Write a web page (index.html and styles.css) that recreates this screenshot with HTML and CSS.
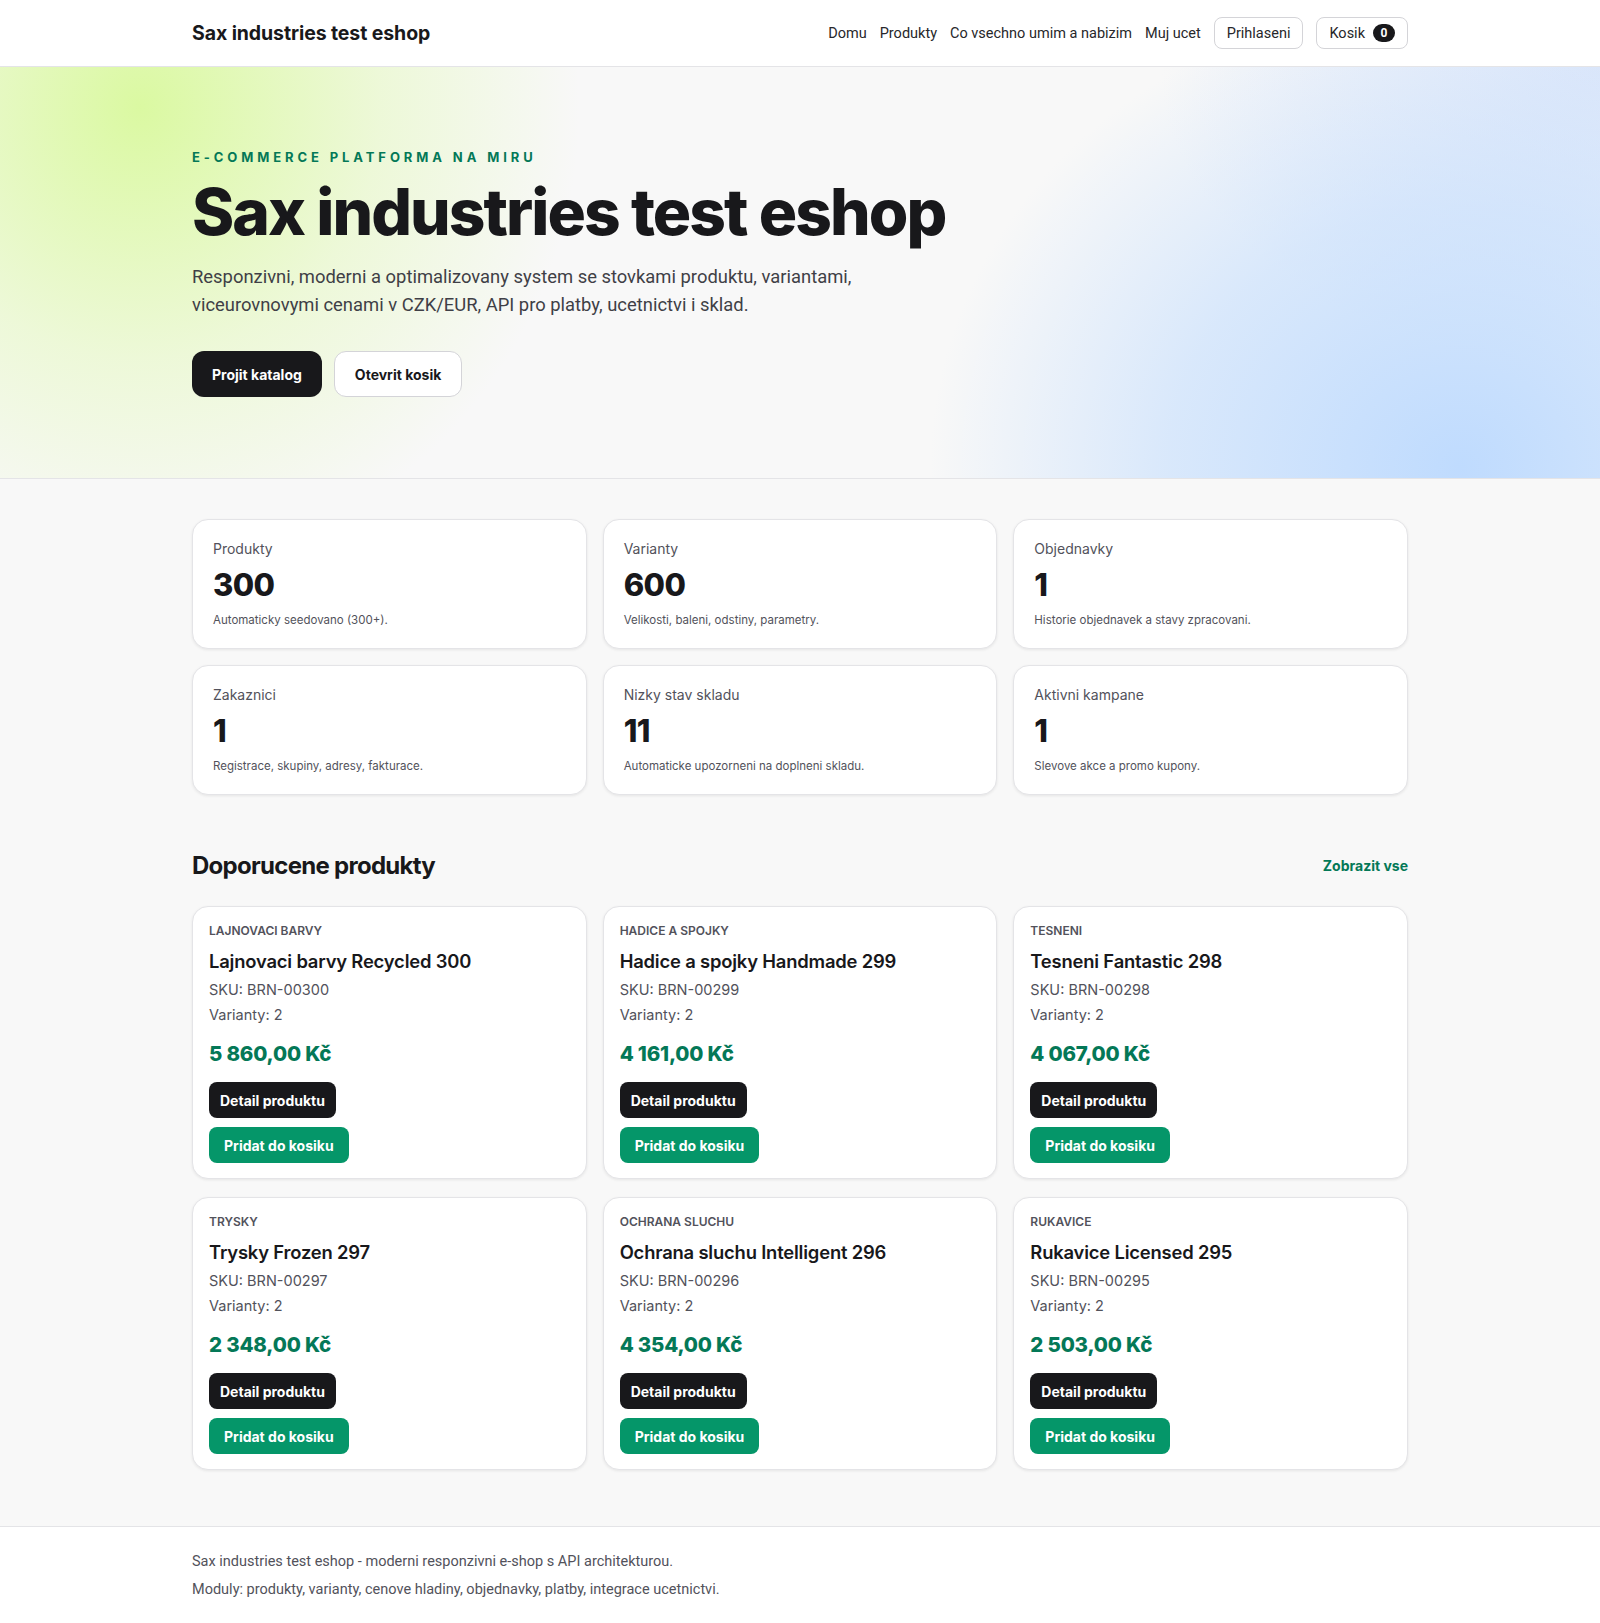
FILE: index.html
```html
<!DOCTYPE html>
<html lang="cs">

<head>
  <meta charset="UTF-8">
  <meta name="viewport" content="width=device-width, initial-scale=1.0">
  <title>Sax industries test eshop</title>
  <link rel="stylesheet" href="styles.css">
</head>

<body>
  <header class="site-header">
    <div class="container header-inner">
      <a class="brand" href="#">Sax industries test eshop</a>
      <nav class="nav">
        <a href="#">Domu</a>
        <a href="#">Produkty</a>
        <a href="#">Co vsechno umim a nabizim</a>
        <a href="#">Muj ucet</a>
        <a class="nav-btn" href="#">Prihlaseni</a>
        <a class="nav-btn" href="#">Kosik <span class="badge">0</span></a>
      </nav>
    </div>
  </header>

  <section class="hero">
    <div class="container">
      <p class="eyebrow">E-commerce platforma na miru</p>
      <h1 class="hero-title">Sax industries test eshop</h1>
      <p class="hero-text">Responzivni, moderni a optimalizovany system se stovkami produktu, variantami, viceurovnovymi cenami v CZK/EUR, API pro platby, ucetnictvi i sklad.</p>
      <div class="hero-actions">
        <a class="btn btn-dark" href="#">Projit katalog</a>
        <a class="btn btn-light" href="#">Otevrit kosik</a>
      </div>
    </div>
  </section>

  <main class="main">
    <div class="container">
      <div class="stats">
        <div class="stat-card">
          <span class="stat-label">Produkty</span>
          <strong class="stat-value">300</strong>
          <span class="stat-desc">Automaticky seedovano (300+).</span>
        </div>
        <div class="stat-card">
          <span class="stat-label">Varianty</span>
          <strong class="stat-value">600</strong>
          <span class="stat-desc">Velikosti, baleni, odstiny, parametry.</span>
        </div>
        <div class="stat-card">
          <span class="stat-label">Objednavky</span>
          <strong class="stat-value">1</strong>
          <span class="stat-desc">Historie objednavek a stavy zpracovani.</span>
        </div>
        <div class="stat-card">
          <span class="stat-label">Zakaznici</span>
          <strong class="stat-value">1</strong>
          <span class="stat-desc">Registrace, skupiny, adresy, fakturace.</span>
        </div>
        <div class="stat-card">
          <span class="stat-label">Nizky stav skladu</span>
          <strong class="stat-value">11</strong>
          <span class="stat-desc">Automaticke upozorneni na doplneni skladu.</span>
        </div>
        <div class="stat-card">
          <span class="stat-label">Aktivni kampane</span>
          <strong class="stat-value">1</strong>
          <span class="stat-desc">Slevove akce a promo kupony.</span>
        </div>
      </div>

      <div class="section-head">
        <h2>Doporucene produkty</h2>
        <a class="see-all" href="#">Zobrazit vse</a>
      </div>

      <div class="products">
        <div class="product-card">
          <span class="product-cat">Lajnovaci barvy</span>
          <h3 class="product-name">Lajnovaci barvy Recycled 300</h3>
          <p class="product-meta">SKU: BRN-00300</p>
          <p class="product-meta">Varianty: 2</p>
          <p class="product-price">5 860,00 Kč</p>
          <div class="product-actions">
            <a class="btn-sm btn-dark" href="#">Detail produktu</a>
            <a class="btn-sm btn-green" href="#">Pridat do kosiku</a>
          </div>
        </div>
        <div class="product-card">
          <span class="product-cat">Hadice a spojky</span>
          <h3 class="product-name">Hadice a spojky Handmade 299</h3>
          <p class="product-meta">SKU: BRN-00299</p>
          <p class="product-meta">Varianty: 2</p>
          <p class="product-price">4 161,00 Kč</p>
          <div class="product-actions">
            <a class="btn-sm btn-dark" href="#">Detail produktu</a>
            <a class="btn-sm btn-green" href="#">Pridat do kosiku</a>
          </div>
        </div>
        <div class="product-card">
          <span class="product-cat">Tesneni</span>
          <h3 class="product-name">Tesneni Fantastic 298</h3>
          <p class="product-meta">SKU: BRN-00298</p>
          <p class="product-meta">Varianty: 2</p>
          <p class="product-price">4 067,00 Kč</p>
          <div class="product-actions">
            <a class="btn-sm btn-dark" href="#">Detail produktu</a>
            <a class="btn-sm btn-green" href="#">Pridat do kosiku</a>
          </div>
        </div>
        <div class="product-card">
          <span class="product-cat">Trysky</span>
          <h3 class="product-name">Trysky Frozen 297</h3>
          <p class="product-meta">SKU: BRN-00297</p>
          <p class="product-meta">Varianty: 2</p>
          <p class="product-price">2 348,00 Kč</p>
          <div class="product-actions">
            <a class="btn-sm btn-dark" href="#">Detail produktu</a>
            <a class="btn-sm btn-green" href="#">Pridat do kosiku</a>
          </div>
        </div>
        <div class="product-card">
          <span class="product-cat">Ochrana sluchu</span>
          <h3 class="product-name">Ochrana sluchu Intelligent 296</h3>
          <p class="product-meta">SKU: BRN-00296</p>
          <p class="product-meta">Varianty: 2</p>
          <p class="product-price">4 354,00 Kč</p>
          <div class="product-actions">
            <a class="btn-sm btn-dark" href="#">Detail produktu</a>
            <a class="btn-sm btn-green" href="#">Pridat do kosiku</a>
          </div>
        </div>
        <div class="product-card">
          <span class="product-cat">Rukavice</span>
          <h3 class="product-name">Rukavice Licensed 295</h3>
          <p class="product-meta">SKU: BRN-00295</p>
          <p class="product-meta">Varianty: 2</p>
          <p class="product-price">2 503,00 Kč</p>
          <div class="product-actions">
            <a class="btn-sm btn-dark" href="#">Detail produktu</a>
            <a class="btn-sm btn-green" href="#">Pridat do kosiku</a>
          </div>
        </div>
      </div>
    </div>
  </main>

  <footer class="site-footer">
    <div class="container">
      <p>Sax industries test eshop - moderni responzivni e-shop s API architekturou.</p>
      <p>Moduly: produkty, varianty, cenove hladiny, objednavky, platby, integrace ucetnictvi.</p>
    </div>
  </footer>
</body>

</html>
```

FILE: styles.css
```css
* {
  box-sizing: border-box;
}

body {
  margin: 0;
  font-family: Inter, "Noto Sans", sans-serif;
  color: #18181b;
  background-color: #f8f8f8;
}

a {
  color: inherit;
  text-decoration: none;
}

.container {
  width: 1216px;
  margin: 0 auto;
}

/* Header */
.site-header {
  background-color: #fff;
  border-bottom: 1px solid #e4e4e7;
}

.header-inner {
  height: 66px;
  display: flex;
  align-items: center;
  justify-content: space-between;
}

.brand {
  font-size: 19.5px;
  font-weight: 700;
  letter-spacing: -0.005em;
}

.nav {
  display: flex;
  align-items: center;
  gap: 13px;
  font-family: Roboto, sans-serif;
  font-size: 14.5px;
  color: #27272a;
}

.nav-btn {
  display: flex;
  align-items: center;
  gap: 8px;
  height: 32px;
  padding: 0 12px;
  border: 1px solid #d4d4d8;
  border-radius: 8px;
  background-color: #fff;
}

.badge {
  display: inline-flex;
  justify-content: center;
  align-items: center;
  min-width: 22px;
  height: 18px;
  border-radius: 9px;
  background-color: #18181b;
  color: #fff;
  font-size: 12px;
  font-weight: 700;
}

/* Hero */
.hero {
  height: 412px;
  border-bottom: 1px solid #e4e4e7;
  background:
    radial-gradient(ellipse 440px 460px at 140px 40px, rgba(217, 249, 157, 0.95), rgba(217, 249, 157, 0.35) 55%, rgba(217, 249, 157, 0) 100%),
    radial-gradient(ellipse 530px 470px at 1460px 400px, rgba(191, 219, 254, 1), rgba(191, 219, 254, 0.55) 55%, rgba(191, 219, 254, 0) 100%),
    radial-gradient(ellipse 440px 300px at 1600px 0px, rgba(219, 230, 250, 0.9), rgba(219, 230, 250, 0) 100%),
    #f8f8f8;
  padding-top: 82px;
}

.eyebrow {
  margin: 0;
  font-size: 13px;
  font-weight: 700;
  letter-spacing: 0.3em;
  text-transform: uppercase;
  color: #047857;
}

.hero-title {
  margin: 12px 0 0;
  font-size: 64px;
  line-height: 1.1;
  font-weight: 800;
  letter-spacing: -0.03em;
  color: #18181b;
}

.hero-text {
  margin: 16px 0 0;
  max-width: 700px;
  font-family: Roboto, sans-serif;
  font-size: 18.4px;
  line-height: 28px;
  color: #3f3f46;
}

.hero-actions {
  display: flex;
  gap: 12px;
  margin-top: 32px;
}

.btn {
  display: flex;
  align-items: center;
  height: 46px;
  padding: 0 20px;
  border-radius: 12px;
  font-size: 14px;
  font-weight: 700;
}

.btn-dark {
  background-color: #18181b;
  color: #fff;
}

.btn-light {
  background-color: #fff;
  border: 1px solid #d4d4d8;
}

/* Stats */
.main {
  padding: 40px 0 56px;
}

.stats {
  display: grid;
  grid-template-columns: repeat(3, 1fr);
  gap: 16px;
}

.stat-card {
  display: flex;
  flex-direction: column;
  height: 130px;
  padding: 20px 20px;
  background-color: #fff;
  border: 1px solid #e4e4e7;
  border-radius: 16px;
  box-shadow: 0 1px 3px rgba(0, 0, 0, 0.08);
}

.stat-label {
  font-size: 14px;
  color: #52525b;
}

.stat-value {
  margin-top: 8px;
  font-size: 31px;
  font-weight: 800;
  letter-spacing: -0.02em;
  line-height: 40px;
}

.stat-desc {
  margin-top: 8px;
  font-size: 11.5px;
  color: #52525b;
}

/* Products */
.section-head {
  display: flex;
  justify-content: space-between;
  align-items: center;
  margin-top: 56px;
}

.section-head h2 {
  margin: 0;
  font-size: 24px;
  font-weight: 700;
  letter-spacing: -0.03em;
}

.see-all {
  font-size: 14px;
  font-weight: 700;
  color: #047857;
}

.products {
  display: grid;
  grid-template-columns: repeat(3, 1fr);
  gap: 18px 16px;
  margin-top: 26px;
}

.product-card {
  display: flex;
  flex-direction: column;
  height: 273px;
  padding: 16px;
  background-color: #fff;
  border: 1px solid #e4e4e7;
  border-radius: 16px;
  box-shadow: 0 1px 3px rgba(0, 0, 0, 0.08);
}

.product-cat {
  font-size: 12px;
  font-weight: 600;
  text-transform: uppercase;
  color: #52525b;
}

.product-name {
  margin: 12px 0 5px;
  font-size: 18.4px;
  font-weight: 600;
  letter-spacing: -0.01em;
}

.product-meta {
  margin: 0;
  font-size: 14.5px;
  line-height: 25px;
  color: #52525b;
}

.product-price {
  margin: 14px 0 16px;
  font-size: 20.5px;
  font-weight: 800;
  letter-spacing: -0.01em;
  color: #047857;
}

.product-actions {
  display: flex;
  flex-direction: column;
  align-items: flex-start;
  gap: 9px;
}

.btn-sm {
  display: flex;
  align-items: center;
  height: 36px;
  padding: 0 11px;
  border-radius: 8px;
  font-size: 14px;
  font-weight: 700;
}

.btn-green {
  padding: 0 15px;
  background-color: #059669;
  color: #fff;
}

/* Footer */
.site-footer {
  background-color: #fff;
  border-top: 1px solid #e4e4e7;
  padding: 26px 0 30px;
  font-family: Roboto, sans-serif;
  font-size: 14.5px;
  color: #52525b;
}

.site-footer p {
  margin: 0 0 11px;
}

.site-footer p:last-child {
  margin-bottom: 0;
}
```
